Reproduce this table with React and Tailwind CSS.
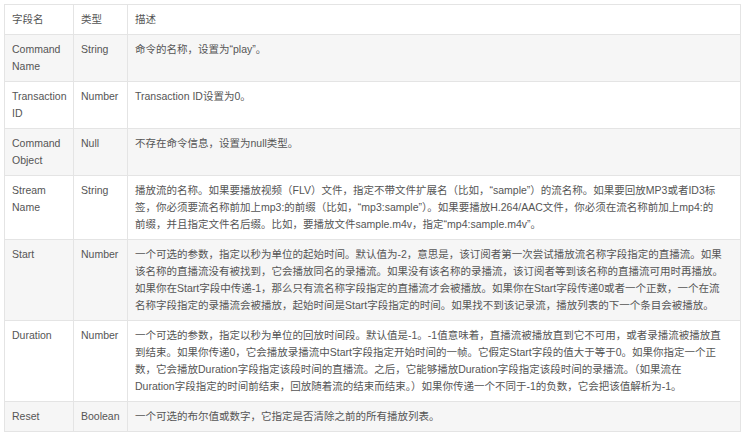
import React from "react";

const rows = [
  { name: ["Command", "Name"], type: "String", desc: ["命令的名称，设置为“play”。"] },
  { name: ["Transaction", "ID"], type: "Number", desc: ["Transaction ID设置为0。"] },
  { name: ["Command", "Object"], type: "Null", desc: ["不存在命令信息，设置为null类型。"] },
  {
    name: ["Stream", "Name"],
    type: "String",
    desc: [
      "播放流的名称。如果要播放视频（FLV）文件，指定不带文件扩展名（比如，“sample”）的流名称。如果要回放MP3或者ID3标",
      "签，你必须要流名称前加上mp3:的前缀（比如，“mp3:sample”）。如果要播放H.264/AAC文件，你必须在流名称前加上mp4:的",
      "前缀，并且指定文件名后缀。比如，要播放文件sample.m4v，指定“mp4:sample.m4v”。",
    ],
  },
  {
    name: ["Start"],
    type: "Number",
    desc: [
      "一个可选的参数，指定以秒为单位的起始时间。默认值为-2，意思是，该订阅者第一次尝试播放流名称字段指定的直播流。如果",
      "该名称的直播流没有被找到，它会播放同名的录播流。如果没有该名称的录播流，该订阅者等到该名称的直播流可用时再播放。",
      "如果你在Start字段中传递-1，那么只有流名称字段指定的直播流才会被播放。如果你在Start字段传递0或者一个正数，一个在流",
      "名称字段指定的录播流会被播放，起始时间是Start字段指定的时间。如果找不到该记录流，播放列表的下一个条目会被播放。",
    ],
  },
  {
    name: ["Duration"],
    type: "Number",
    desc: [
      "一个可选的参数，指定以秒为单位的回放时间段。默认值是-1。-1值意味着，直播流被播放直到它不可用，或者录播流被播放直",
      "到结束。如果你传递0，它会播放录播流中Start字段指定开始时间的一帧。它假定Start字段的值大于等于0。如果你指定一个正",
      "数，它会播放Duration字段指定该段时间的直播流。之后，它能够播放Duration字段指定该段时间的录播流。（如果流在",
      "Duration字段指定的时间前结束，回放随着流的结束而结束。）如果你传递一个不同于-1的负数，它会把该值解析为-1。",
    ],
  },
  { name: ["Reset"], type: "Boolean", desc: ["一个可选的布尔值或数字，它指定是否清除之前的所有播放列表。"] },
];

const td = "border border-[#e4e4e4] align-top px-[7px] py-[6px]";

export default function App() {
  return (
    <div
      className="w-[746px] h-[434px] bg-white p-[4px] text-[10.5px] leading-[17px] text-[#555555]"
      style={{ fontFamily: '"Liberation Sans", Arial, "Noto Sans CJK SC", sans-serif' }}
    >
      <table className="w-[737px] border-collapse table-fixed">
        <colgroup>
          <col className="w-[69px]" />
          <col className="w-[54px]" />
          <col />
        </colgroup>
        <thead>
          <tr className="bg-white">
            <td className={td}>字段名</td>
            <td className={td}>类型</td>
            <td className={td}>描述</td>
          </tr>
        </thead>
        <tbody>
          {rows.map((r, i) => (
            <tr key={i} className={i % 2 === 0 ? "bg-[#f6f6f6]" : "bg-white"}>
              <td className={td}>
                {r.name.map((n, j) => (
                  <div key={j}>{n}</div>
                ))}
              </td>
              <td className={td}>{r.type}</td>
              <td className={td}>
                {r.desc.map((d, j) => (
                  <div key={j} className="whitespace-nowrap">{d}</div>
                ))}
              </td>
            </tr>
          ))}
        </tbody>
      </table>
    </div>
  );
}
